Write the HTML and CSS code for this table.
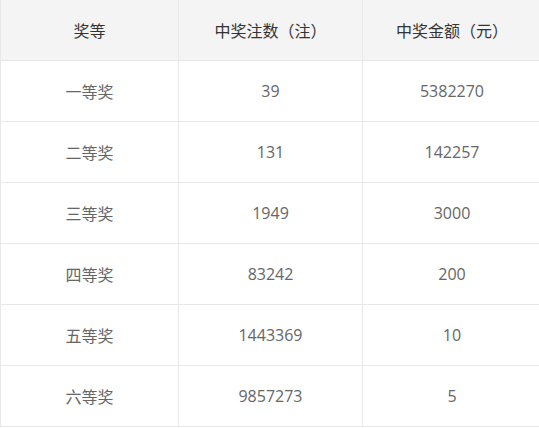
FILE: index.html
```html
<!DOCTYPE html>
<html lang="zh-CN">
<head>
<meta charset="utf-8">
<link rel="stylesheet" href="styles.css">
</head>
<body>
<table class="prize-table">
  <thead>
    <tr><th class="c1">奖等</th><th class="c2">中奖注数（注）</th><th class="c3">中奖金额（元）</th></tr>
  </thead>
  <tbody>
    <tr><td>一等奖</td><td>39</td><td>5382270</td></tr>
    <tr><td>二等奖</td><td>131</td><td>142257</td></tr>
    <tr><td>三等奖</td><td>1949</td><td>3000</td></tr>
    <tr><td>四等奖</td><td>83242</td><td>200</td></tr>
    <tr><td>五等奖</td><td>1443369</td><td>10</td></tr>
    <tr><td>六等奖</td><td>9857273</td><td>5</td></tr>
  </tbody>
</table>
</body>
</html>
```
FILE: styles.css
```css
html, body {
  margin: 0;
  padding: 0;
  background: #fff;
}
.prize-table {
  border-collapse: collapse;
  width: 541px;
  table-layout: fixed;
  font-family: "Open Sans", "Noto Sans CJK SC", sans-serif;
  font-size: 16px;
}
.prize-table th,
.prize-table td {
  border: 1px solid #e8e8e8;
  padding: 0;
  text-align: center;
  vertical-align: middle;
  box-sizing: border-box;
}
.prize-table thead th {
  border-top: none;
  background: #f4f4f4;
  color: #333;
  font-weight: normal;
  height: 60px;
}
.prize-table td {
  color: #666;
  height: 61px;
}
.c1 { width: 178px; }
.c2 { width: 184px; }
.c3 { width: 179px; }
```
